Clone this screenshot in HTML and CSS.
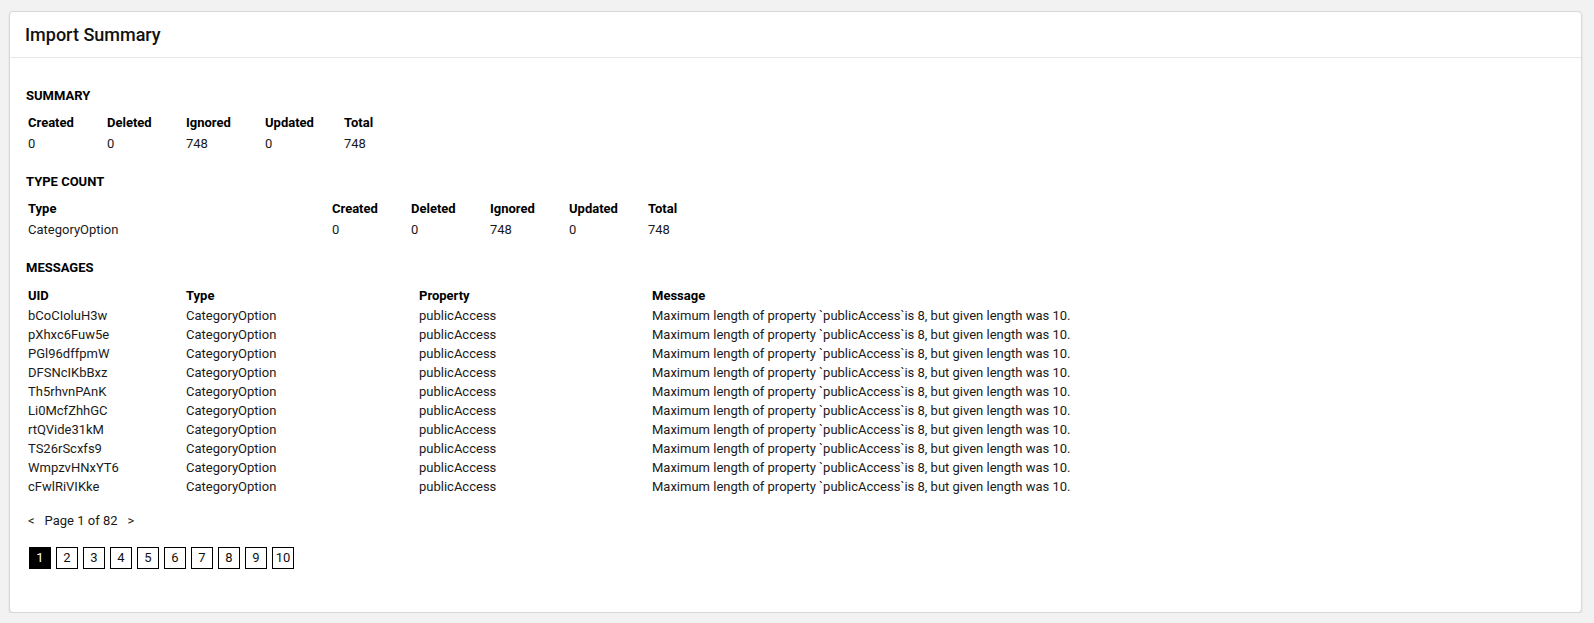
FILE: index.html
```
<!DOCTYPE html>
<html lang="en">
<head>
<meta charset="utf-8">
<title>Import Summary</title>
<link rel="stylesheet" href="styles.css">
</head>
<body>
<div class="card">
  <div class="card-header">Import Summary</div>
  <div class="card-body">
    <div class="section">
      <div class="section-title">SUMMARY</div>
      <table class="tbl sum">
        <thead><tr><th>Created</th><th>Deleted</th><th>Ignored</th><th>Updated</th><th>Total</th></tr></thead>
        <tbody><tr><td>0</td><td>0</td><td>748</td><td>0</td><td>748</td></tr></tbody>
      </table>
    </div>
    <div class="section">
      <div class="section-title">TYPE COUNT</div>
      <table class="tbl sum types">
        <thead><tr><th>Type</th><th>Created</th><th>Deleted</th><th>Ignored</th><th>Updated</th><th>Total</th></tr></thead>
        <tbody><tr><td>CategoryOption</td><td>0</td><td>0</td><td>748</td><td>0</td><td>748</td></tr></tbody>
      </table>
    </div>
    <div class="section section-msgs">
      <div class="section-title">MESSAGES</div>
      <table class="tbl msgs">
        <thead><tr><th class="c-uid">UID</th><th class="c-type">Type</th><th class="c-prop">Property</th><th>Message</th></tr></thead>
        <tbody>
          <tr><td>bCoCIoluH3w</td><td>CategoryOption</td><td>publicAccess</td><td>Maximum length of property `publicAccess`is 8, but given length was 10.</td></tr>
          <tr><td>pXhxc6Fuw5e</td><td>CategoryOption</td><td>publicAccess</td><td>Maximum length of property `publicAccess`is 8, but given length was 10.</td></tr>
          <tr><td>PGl96dffpmW</td><td>CategoryOption</td><td>publicAccess</td><td>Maximum length of property `publicAccess`is 8, but given length was 10.</td></tr>
          <tr><td>DFSNcIKbBxz</td><td>CategoryOption</td><td>publicAccess</td><td>Maximum length of property `publicAccess`is 8, but given length was 10.</td></tr>
          <tr><td>Th5rhvnPAnK</td><td>CategoryOption</td><td>publicAccess</td><td>Maximum length of property `publicAccess`is 8, but given length was 10.</td></tr>
          <tr><td>Li0McfZhhGC</td><td>CategoryOption</td><td>publicAccess</td><td>Maximum length of property `publicAccess`is 8, but given length was 10.</td></tr>
          <tr><td>rtQVide31kM</td><td>CategoryOption</td><td>publicAccess</td><td>Maximum length of property `publicAccess`is 8, but given length was 10.</td></tr>
          <tr><td>TS26rScxfs9</td><td>CategoryOption</td><td>publicAccess</td><td>Maximum length of property `publicAccess`is 8, but given length was 10.</td></tr>
          <tr><td>WmpzvHNxYT6</td><td>CategoryOption</td><td>publicAccess</td><td>Maximum length of property `publicAccess`is 8, but given length was 10.</td></tr>
          <tr><td>cFwlRiVIKke</td><td>CategoryOption</td><td>publicAccess</td><td>Maximum length of property `publicAccess`is 8, but given length was 10.</td></tr>
        </tbody>
      </table>
    </div>
    <div class="pager">
      <span class="pager-arrow">&lt;</span><span class="pager-label">Page 1 of 82</span><span class="pager-arrow">&gt;</span>
    </div>
    <div class="pages">
      <span class="page active">1</span>
      <span class="page">2</span>
      <span class="page">3</span>
      <span class="page">4</span>
      <span class="page">5</span>
      <span class="page">6</span>
      <span class="page">7</span>
      <span class="page">8</span>
      <span class="page">9</span>
      <span class="page">10</span>
    </div>
  </div>
</div>
</body>
</html>
```
FILE: styles.css
```
html, body {
  margin: 0;
  background: #f2f2f2;
}
body {
  padding: 11px 12px 0 9px;
  font-family: Roboto, "Liberation Sans", sans-serif;
  color: #1a1a1a;
}
.card {
  box-sizing: border-box;
  height: 602px;
  background: #fff;
  border: 1px solid #d8d8d8;
  border-radius: 4px;
  box-shadow: 0 1px 2px rgba(0, 0, 0, 0.12);
}
.card-header {
  height: 45px;
  line-height: 46px;
  padding: 0 15px;
  font-size: 18px;
  font-weight: 500;
  color: #111;
  border-bottom: 1px solid #e6e6e6;
}
.card-body {
  padding: 28px 16px 0 16px;
  font-size: 13px;
  line-height: 19px;
}
.section + .section {
  margin-top: 18px;
}
.section-title {
  font-weight: 700;
  color: #000;
  margin-bottom: 7px;
}
.section-msgs .section-title {
  margin-bottom: 8px;
}
.section.section-msgs {
  margin-top: 18px;
}
.tbl {
  border-collapse: collapse;
  border-spacing: 0;
  font-size: 13px;
  line-height: 19px;
}
.tbl th {
  text-align: left;
  font-weight: 700;
  color: #000;
}
.sum th, .sum td {
  padding: 1px 2px;
  width: 75px;
  text-align: left;
}
.types th:first-child, .types td:first-child {
  width: 300px;
}
.msgs {
  width: 1536px;
}
.msgs th {
  padding: 1px 2px 1px;
}
.msgs td {
  padding: 0 2px;
}
.c-uid { width: 154px; }
.c-type { width: 229px; }
.c-prop { width: 229px; }
.pager {
  margin-top: 15px;
  padding-left: 2px;
}
.pager-label {
  margin: 0 10px;
}
.pages {
  margin-top: 17px;
  margin-left: 3px;
  display: flex;
  gap: 5px;
}
.page {
  box-sizing: border-box;
  width: 22px;
  height: 22px;
  border: 1px solid #000;
  line-height: 20px;
  text-align: center;
  font-size: 13px;
  color: #111;
}
.page.active {
  background: #000;
  color: #fff;
}
```
